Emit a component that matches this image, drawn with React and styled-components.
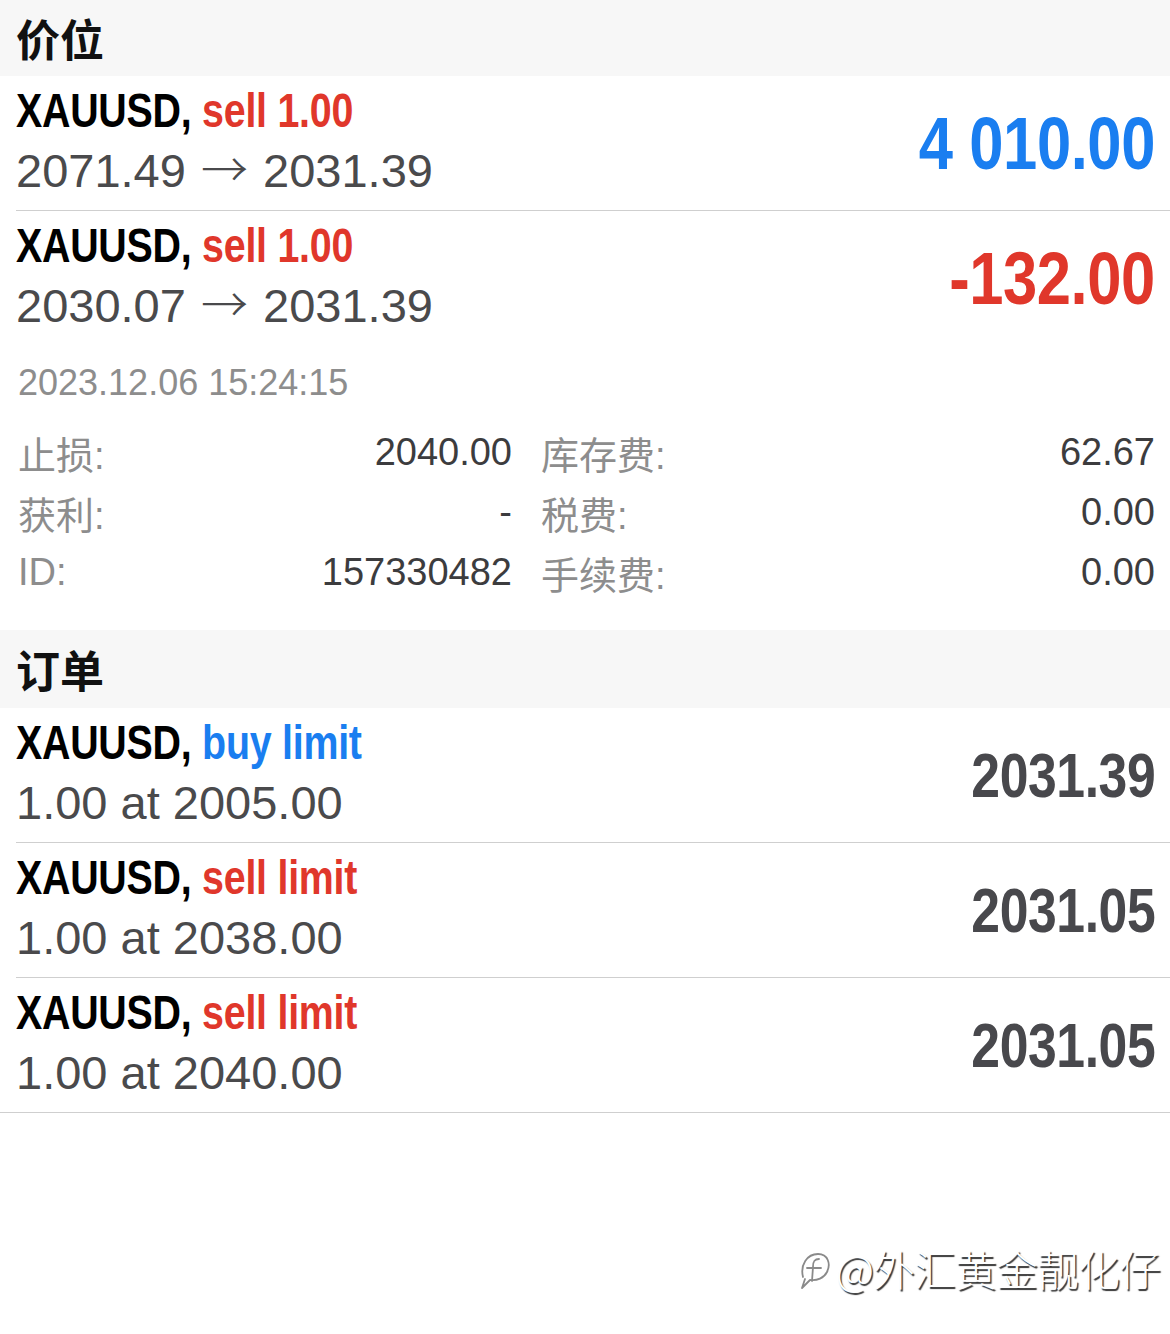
import React from 'react'
import styled, { createGlobalStyle } from 'styled-components'

const Global = createGlobalStyle`
  html, body { margin: 0; padding: 0; background: #fff; }
  body { font-family: "Liberation Sans", "Noto Sans CJK SC", sans-serif; }
`

const CJK = `"Liberation Sans", "Noto Sans CJK SC", sans-serif`

const Page = styled.div`
  width: 1170px;
  min-height: 1334px;
  background: #fff;
`

const SectionHeader = styled.div`
  height: ${p => p.$h || 76}px;
  background: #f7f7f7;
  display: flex;
  align-items: center;
  padding-left: 16px;
  font-family: ${CJK};
  font-weight: 700;
  font-size: 44px;
  color: #111;
`

const Row = styled.div`
  display: flex;
  align-items: center;
  justify-content: space-between;
  margin-left: ${p => (p.$full ? 0 : 16)}px;
  padding-left: ${p => (p.$full ? 16 : 0)}px;
  padding-right: 15px;
  border-bottom: ${p => (p.$noline ? 'none' : '1.5px solid #cfcfcf')};
`

const Left = styled.div`
  display: flex;
  flex-direction: column;
  padding: 6px 0 8px;
`

// Helvetica condensed bold look: bold Liberation squeezed horizontally
const Title = styled.div`
  font-family: "Liberation Sans", sans-serif;
  font-weight: 700;
  font-size: 48px;
  line-height: 58px;
  color: #000;
  white-space: nowrap;
  transform: scaleX(0.82);
  transform-origin: left center;
  letter-spacing: -0.3px;
`

const Kind = styled.span`
  color: ${p => (p.$buy ? '#1a7ef0' : '#e0372b')};
`

const Sub = styled.div`
  font-size: 47px;
  line-height: 62px;
  height: 62px;
  color: #4a4a4c;
  white-space: nowrap;
`

const Arrow = styled.span`
  font-family: "Noto Sans CJK SC", sans-serif;
  font-weight: 300;
  line-height: 1;
  margin: 0 2px;
`

const Value = styled.div`
  font-family: "Liberation Sans", sans-serif;
  font-weight: 700;
  font-size: ${p => p.$size || 75}px;
  color: ${p => p.$color || '#48484c'};
  white-space: nowrap;
  transform: scaleX(0.82);
  transform-origin: right center;
  letter-spacing: -0.5px;
`

const Details = styled.div`
  padding: 13px 15px 28px 18px;
`

const Stamp = styled.div`
  font-size: 36px;
  line-height: 50px;
  color: #8d8d8d;
`

const Grid = styled.div`
  margin-top: 14px;
  display: grid;
  grid-template-columns: 494px 1fr;
  column-gap: 29px;
`

const Cell = styled.div`
  display: flex;
  justify-content: space-between;
  align-items: center;
  height: 60px;
  font-size: 38px;
`

const Label = styled.span`
  font-family: ${CJK};
  color: #8d8d8d;
`

const Num = styled.span`
  color: #3c3c3e;
`

const Footer = styled.div`
  display: flex;
  justify-content: flex-end;
  align-items: center;
  gap: 2px;
  padding: 130px 10px 0 0;
`

const Mark = styled.span`
  font-family: "Noto Sans CJK SC", sans-serif;
  font-weight: 300;
  font-size: 42px;
  line-height: 50px;
  color: #fff;
  text-shadow: 1.5px 1.5px 1px rgba(0,0,0,0.8), -1px -1px 0 rgba(255,255,255,0.9);
  letter-spacing: -1px;
`

const positions = [
  { from: '2071.49', to: '2031.39', value: '4 010.00', color: '#1a7ef0' },
  { from: '2030.07', to: '2031.39', value: '-132.00', color: '#e0372b' },
]

const orders = [
  { kind: 'buy limit', buy: true, at: '2005.00', price: '2031.39' },
  { kind: 'sell limit', at: '2038.00', price: '2031.05' },
  { kind: 'sell limit', at: '2040.00', price: '2031.05' },
]

const details = [
  ['止损:', '2040.00', '库存费:', '62.67'],
  ['获利:', '-', '税费:', '0.00'],
  ['ID:', '157330482', '手续费:', '0.00'],
]

const Logo = () => (
  <svg width="38" height="50" viewBox="0 0 38 50" fill="none">
    <g stroke="#8a8a8a" strokeWidth="1.8" strokeLinecap="round" strokeLinejoin="round">
      <path d="M7 34 C4 22 11 11 22 11 C32 11 35 21 31 29 C28 35 21 38 14 37 L6 45 L9 36" />
      <path d="M23 16 C18 16 17 19 17 24 L16 38" />
      <path d="M11 25 L25 25" />
    </g>
  </svg>
)

const App = () => {
  return (
    <Page>
      <Global />
      <SectionHeader>价位</SectionHeader>
      {positions.map((p, i) => (
        <Row key={i} $noline={i === positions.length - 1}>
          <Left>
            <Title>XAUUSD, <Kind>sell 1.00</Kind></Title>
            <Sub>{p.from} <Arrow>→</Arrow> {p.to}</Sub>
          </Left>
          <Value $color={p.color}>{p.value}</Value>
        </Row>
      ))}
      <Details>
        <Stamp>2023.12.06 15:24:15</Stamp>
        <Grid>
          {details.map((d, i) => (
            <React.Fragment key={i}>
              <Cell><Label>{d[0]}</Label><Num>{d[1]}</Num></Cell>
              <Cell><Label>{d[2]}</Label><Num>{d[3]}</Num></Cell>
            </React.Fragment>
          ))}
        </Grid>
      </Details>
      <SectionHeader $h={78}>订单</SectionHeader>
      {orders.map((o, i) => (
        <Row key={i} $full={i === orders.length - 1}>
          <Left>
            <Title>XAUUSD, <Kind $buy={o.buy}>{o.kind}</Kind></Title>
            <Sub>1.00 at {o.at}</Sub>
          </Left>
          <Value $size={63}>{o.price}</Value>
        </Row>
      ))}
      <Footer>
        <Logo />
        <Mark>@外汇黄金靓化仔</Mark>
      </Footer>
    </Page>
  )
}

export default App
